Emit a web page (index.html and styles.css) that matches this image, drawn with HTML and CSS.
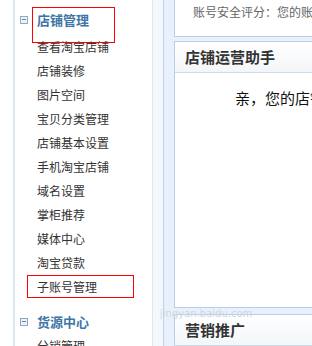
FILE: index.html
```html
<!DOCTYPE html>
<html lang="zh-CN">
<head>
<meta charset="utf-8">
<title>店铺管理</title>
<link rel="stylesheet" href="styles.css">
</head>
<body>
<div class="page">
  <aside class="sidebar">
    <div class="group-title"><span class="toggle"></span><span class="title-text marked">店铺管理</span></div>
    <ul class="menu">
      <li>查看淘宝店铺</li>
      <li>店铺装修</li>
      <li>图片空间</li>
      <li>宝贝分类管理</li>
      <li>店铺基本设置</li>
      <li>手机淘宝店铺</li>
      <li>域名设置</li>
      <li>掌柜推荐</li>
      <li>媒体中心</li>
      <li>淘宝贷款</li>
      <li><span class="mark-box">子账号管理</span></li>
    </ul>
    <div class="group-title second"><span class="toggle"></span><span class="title-text">货源中心</span></div>
    <ul class="menu">
      <li>分销管理</li>
    </ul>
  </aside>
  <div class="gutter"></div>
  <main class="main">
    <div class="notice">账号安全评分：您的账号安全等级较低</div>
    <section class="panel first">
      <h2 class="panel-head">店铺运营助手</h2>
      <div class="panel-body">亲，您的店铺暂无需要处理的事项</div>
    </section>
    <section class="panel">
      <h2 class="panel-head">营销推广</h2>
    </section>
  </main>
  <div class="watermark">jingyan.baidu.com</div>
</div>
</body>
</html>
```

FILE: styles.css
```css
* { box-sizing: border-box; }
html, body { margin: 0; padding: 0; }
body {
  width: 312px;
  height: 346px;
  overflow: hidden;
  background: #fff;
  font-family: "Noto Sans CJK SC", "DejaVu Sans", sans-serif;
  color: #333;
}
.page {
  position: relative;
  display: flex;
  height: 346px;
  overflow: hidden;
}
.sidebar {
  flex: 0 0 140px;
  margin-left: 13px;
  border-left: 2px solid #dde5ef;
  border-right: 1px solid #dbe6f1;
  padding-top: 8px;
  background: #fff;
}
.group-title {
  display: flex;
  align-items: center;
  height: 24px;
  padding-left: 5px;
  margin-bottom: 3px;
}
.group-title.second {
  margin-top: 11px;
  margin-bottom: 0;
}
.toggle {
  position: relative;
  flex: 0 0 8px;
  width: 8px;
  height: 8px;
  margin-right: 9px;
  border: 1px solid #8fa9c3;
  background: #eef2f7;
}
.toggle::before {
  content: "";
  position: absolute;
  left: 1px;
  top: 2px;
  width: 4px;
  height: 1px;
  background: #5f86ab;
}
.title-text {
  position: relative;
  display: inline-block;
  line-height: 24px;
  font-size: 13px;
  font-weight: bold;
  color: #3d76a6;
}
.marked::after {
  content: "";
  position: absolute;
  left: -5px;
  top: -1px;
  width: 81px;
  height: 34px;
  border: 1px solid #ff0000;
}
.menu {
  list-style: none;
  margin: 0;
  padding: 0;
}
.menu li {
  height: 24px;
  line-height: 24px;
  padding-left: 22px;
  font-size: 12px;
  color: #333;
  white-space: nowrap;
}
.mark-box {
  display: block;
  width: 107px;
  height: 23px;
  margin-left: -10px;
  padding-left: 9px;
  line-height: 22px;
  border: 1px solid #ff0000;
}
.gutter {
  flex: 0 0 11px;
  background: #f4f8fc;
  border-right: 1px solid #bcd2ea;
}
.main {
  flex: 1 1 auto;
  min-width: 0;
  background: #e8f1fb;
  padding-left: 10px;
  display: flex;
  flex-direction: column;
}
.notice {
  height: 40px;
  padding: 1px 0 0 18px;
  line-height: 22px;
  font-size: 12px;
  color: #666;
  background: #fff;
  border-left: 1px solid #b8cfe8;
  border-bottom: 1px solid #b8cfe8;
  white-space: nowrap;
  overflow: hidden;
}
.panel {
  background: #fff;
  border-left: 1px solid #b8cfe8;
  border-top: 1px solid #b8cfe8;
  margin-top: 4px;
}
.panel.first {
  border-bottom: 1px solid #b8cfe8;
}
.panel + .panel {
  margin-top: 6px;
}
.panel-head {
  margin: 0;
  height: 31px;
  padding-left: 10px;
  line-height: 30px;
  font-size: 15px;
  font-weight: bold;
  color: #333;
  background: linear-gradient(#ffffff, #f3f6f9);
  border-bottom: 1px solid #cddcec;
  white-space: nowrap;
  overflow: hidden;
}
.panel-body {
  height: 234px;
  padding: 14px 0 0 60px;
  line-height: 22px;
  font-size: 15px;
  color: #111;
  white-space: nowrap;
  overflow: hidden;
}
.watermark {
  position: absolute;
  left: 160px;
  top: 309px;
  font-family: "DejaVu Sans", sans-serif;
  font-size: 10px;
  line-height: 10px;
  color: #cfd6dd;
  pointer-events: none;
}
```
